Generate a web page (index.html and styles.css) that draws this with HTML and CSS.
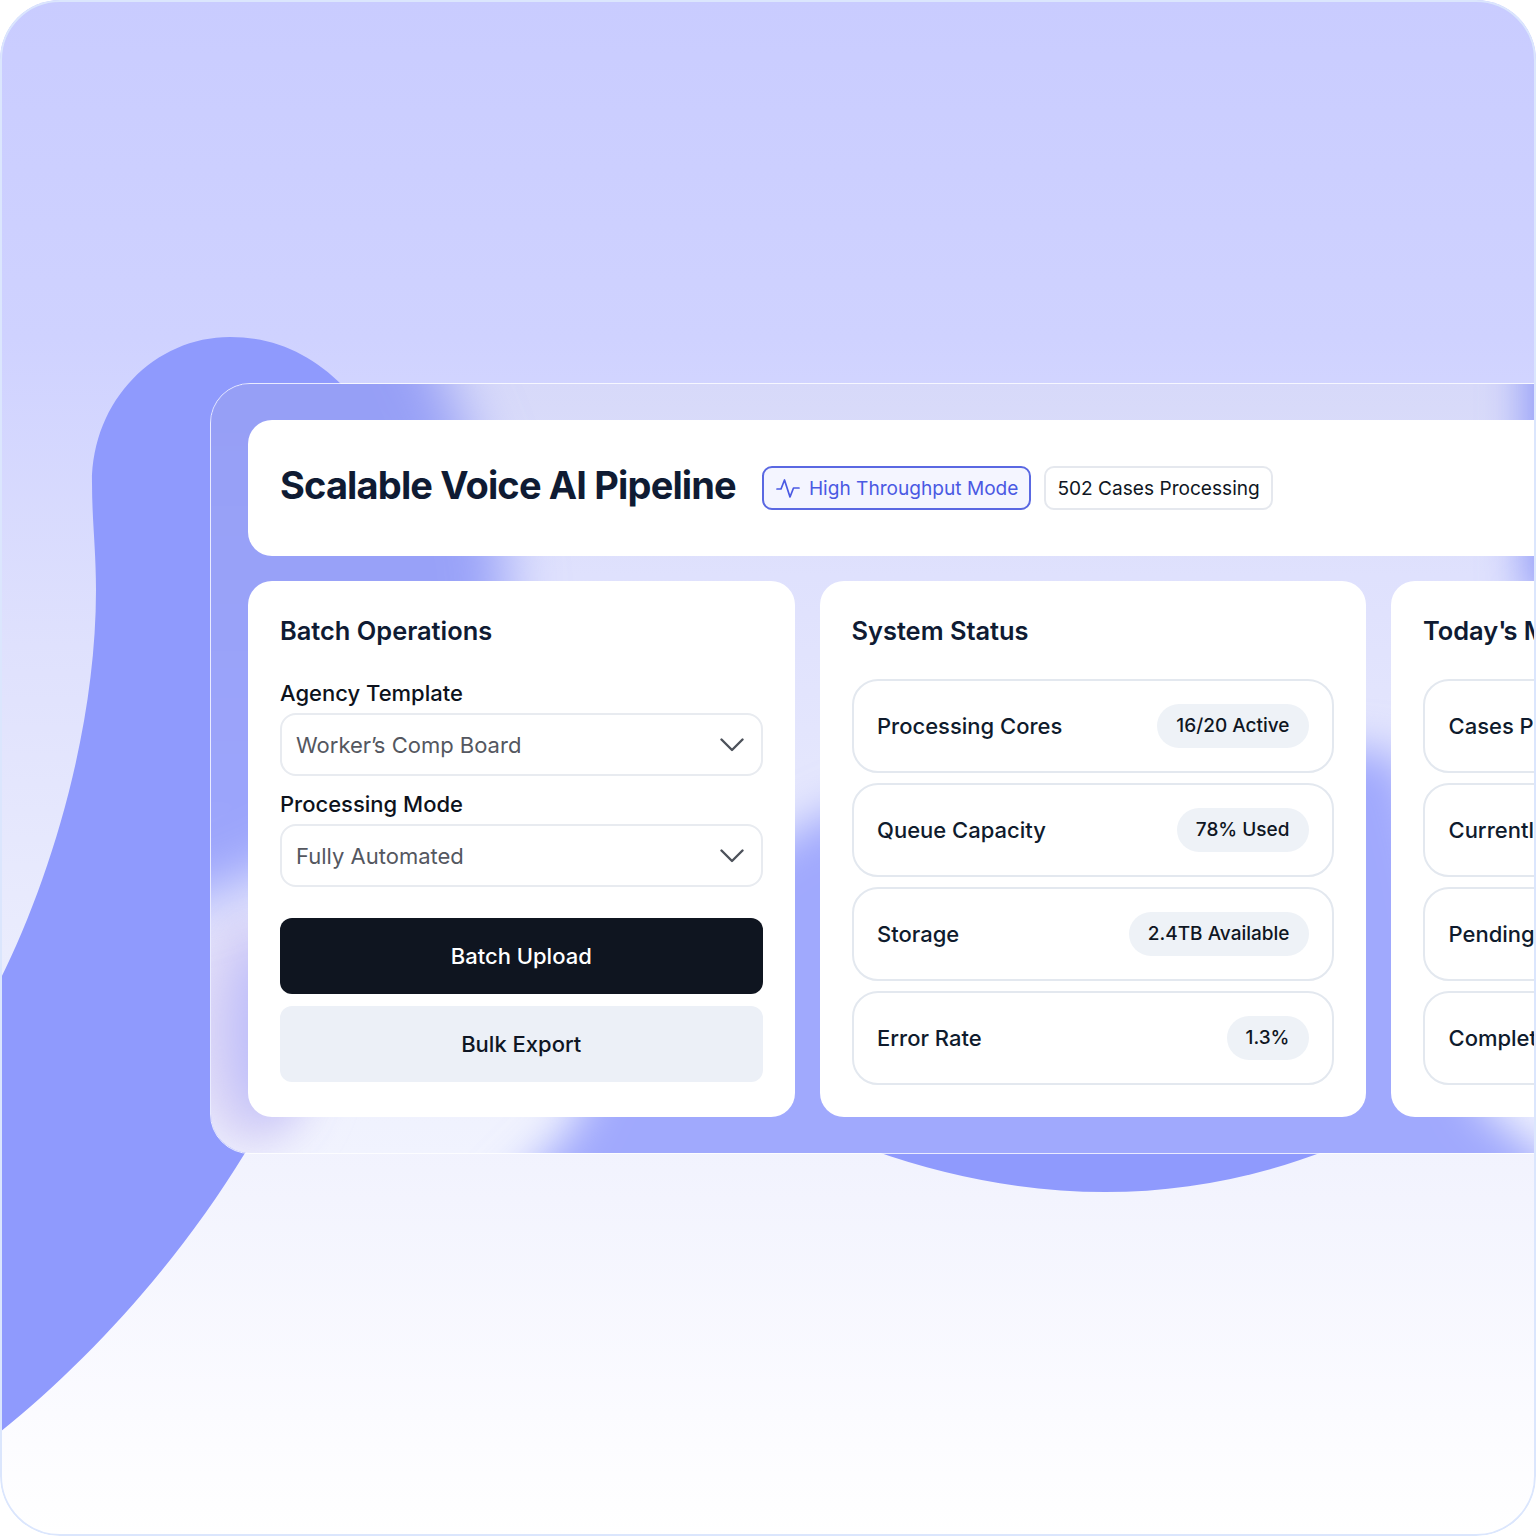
FILE: index.html
```html
<!DOCTYPE html>
<html lang="en">
<head>
<meta charset="utf-8">
<title>Scalable Voice AI Pipeline</title>
<link rel="stylesheet" href="styles.css">
</head>
<body>
<div class="page">
  <svg class="blobs" viewBox="0 0 1536 1536" aria-hidden="true">
    <path d="M0 980C50 880 96 730 96 590C96 550 92 520 92 483C92 400 155 337 230 337C275 337 312 355 342 385L342 1000L250 1148L245 1153C180 1260 90 1360 0 1432Z"/>
    <path d="M872 1150C950 1178 1030 1192 1105 1192C1180 1192 1255 1178 1328 1150Z"/>
  </svg>
  <main class="panel">
    <svg class="glass" viewBox="210 383 1326 770" aria-hidden="true">
      <defs>
        <linearGradient id="base" x1="0" y1="383" x2="0" y2="1153" gradientUnits="userSpaceOnUse">
          <stop offset="0" stop-color="#d7d9f9"/>
          <stop offset=".25" stop-color="#dfe1fd"/>
          <stop offset=".6" stop-color="#e6e8fd"/>
          <stop offset="1" stop-color="#f1f3fe"/>
        </linearGradient>
        <linearGradient id="blueA" x1="0" y1="383" x2="0" y2="900" gradientUnits="userSpaceOnUse">
          <stop offset="0" stop-color="#969ff6"/>
          <stop offset="1" stop-color="#9da6fc"/>
        </linearGradient>
        <filter id="soft" filterUnits="userSpaceOnUse" x="0" y="0" width="2000" height="2000"><feGaussianBlur stdDeviation="28"/></filter>
        <filter id="mid" filterUnits="userSpaceOnUse" x="0" y="0" width="2000" height="2000"><feGaussianBlur stdDeviation="22"/></filter>
      </defs>
      <rect x="210" y="383" width="1326" height="770" fill="url(#base)"/>
      <ellipse cx="250" cy="1030" rx="70" ry="120" fill="#dcd7f7" filter="url(#mid)"/>
      <ellipse cx="266" cy="1030" rx="34" ry="90" fill="#bcbcfa" filter="url(#mid)"/>
      <path d="M100 250L400 250C420 360 520 500 505 620C470 760 330 880 100 925Z" fill="url(#blueA)" filter="url(#soft)"/>
      <path d="M470 1230L570 1130C650 960 730 830 900 790C1050 750 1290 735 1400 755C1450 900 1455 1040 1480 1105L1580 1185L1580 1330L470 1330Z" fill="#a0a9fd" filter="url(#mid)"/>
      <rect x="1525" y="300" width="100" height="300" fill="#8f99f8" filter="url(#mid)"/>
    </svg>
    <header class="head">
      <h1 class="title">Scalable Voice AI Pipeline</h1>
      <span class="badge badge-active">
        <svg class="pulse" viewBox="0 0 24 24" aria-hidden="true"><polyline points="1,13 5,13 8.5,4 14,21 17.5,12 23,12"/></svg>
        High Throughput Mode
      </span>
      <span class="badge">502 Cases Processing</span>
    </header>
    <div class="cols">
      <section class="card">
        <h2 class="card-title card-title-form">Batch Operations</h2>
        <label class="label">Agency Template</label>
        <div class="select">
          <span>Worker<span class="apos">’</span>s Comp Board</span>
          <svg class="chev" viewBox="0 0 24 14" aria-hidden="true"><polyline points="1.5,1.5 12,12 22.5,1.5"/></svg>
        </div>
        <label class="label">Processing Mode</label>
        <div class="select">
          <span>Fully Automated</span>
          <svg class="chev" viewBox="0 0 24 14" aria-hidden="true"><polyline points="1.5,1.5 12,12 22.5,1.5"/></svg>
        </div>
        <button class="btn btn-dark">Batch Upload</button>
        <button class="btn btn-light">Bulk Export</button>
      </section>
      <section class="card">
        <h2 class="card-title">System Status</h2>
        <ul class="rows">
          <li class="row"><span>Processing Cores</span><span class="pill">16/20 Active</span></li>
          <li class="row"><span>Queue Capacity</span><span class="pill">78% Used</span></li>
          <li class="row"><span>Storage</span><span class="pill">2.4TB Available</span></li>
          <li class="row"><span>Error Rate</span><span class="pill">1.3%</span></li>
        </ul>
      </section>
      <section class="card">
        <h2 class="card-title">Today<span class="apos">'</span>s Metrics</h2>
        <ul class="rows">
          <li class="row"><span>Cases Processed</span><span class="pill">1,248</span></li>
          <li class="row"><span>Currently Active</span><span class="pill">502</span></li>
          <li class="row"><span>Pending Review</span><span class="pill">36</span></li>
          <li class="row"><span>Completed</span><span class="pill">710</span></li>
        </ul>
      </section>
    </div>
  </main>
</div>
</body>
</html>
```

FILE: styles.css
```css
* { box-sizing: border-box; }
html, body { margin: 0; padding: 0; background: #fff; }
body { font-family: Inter, "Liberation Sans", sans-serif; color: #0f1623; }

.page {
  position: relative;
  width: 1536px;
  height: 1536px;
  padding: 383px 0 0 210px;
  overflow: hidden;
  border-radius: 60px;
  background: linear-gradient(180deg, #c9ccff 0%, #cfd2ff 22%, #dfe1fd 42%, #e9ebfd 60%, #f3f4fe 78%, #fbfbff 92%, #ffffff 100%);
}
.page::after {
  content: "";
  position: absolute;
  inset: 0;
  border: 2px solid #dbe6fd;
  border-radius: 60px;
  pointer-events: none;
}
.blobs {
  position: absolute;
  inset: 0;
  width: 1536px;
  height: 1536px;
  fill: #8f9afd;
}

.panel {
  position: relative;
  width: 1765px;
  height: 771px;
  padding: 35.5px 37px;
  border: 1.5px solid rgba(255, 255, 255, .8);
  border-radius: 40px;
  overflow: hidden;
}
.glass {
  position: absolute;
  left: -1.5px;
  top: -1.5px;
  width: 1326px;
  height: 770px;
}

.head {
  position: relative;
  display: flex;
  align-items: center;
  height: 136px;
  padding: 0 32px;
  background: #fff;
  border-radius: 24px;
}
.title {
  margin: 0 26px 0 0;
  font-size: 38px;
  line-height: 46px;
  font-weight: 700;
  letter-spacing: -.85px;
  color: #0f1b33;
  position: relative;
  top: -3px;
}
.badge {
  display: flex;
  align-items: center;
  gap: 9px;
  height: 44px;
  padding: 0 11px 0 11px;
  margin-right: 13px;
  border: 2px solid #e5e8ee;
  border-radius: 10px;
  font-size: 19.1px;
  font-weight: 400;
  color: #0f1623;
}
.badge-active {
  padding-left: 12px;
  border-color: #5a68e2;
  background: #f4f5ff;
  color: #4a59e3;
}
.pulse {
  width: 24px;
  height: 24px;
  fill: none;
  stroke: #4a59e3;
  stroke-width: 1.7;
  stroke-linecap: round;
  stroke-linejoin: round;
}

.cols {
  position: relative;
  display: grid;
  grid-template-columns: 546.5px 546.5px 546.5px;
  gap: 25px;
  margin-top: 25px;
}
.card {
  height: 536px;
  padding: 33px 32px 32px;
  background: #fff;
  border-radius: 24px;
}
.card-title {
  margin: 0 0 31px;
  font-size: 25.4px;
  line-height: 34px;
  font-weight: 600;
  color: #0f1b33;
}
.card-title-form { margin-bottom: 30px; }
.apos { letter-spacing: -3px; }

.label {
  display: block;
  font-size: 22px;
  line-height: 30px;
  font-weight: 500;
  color: #0d121c;
  margin-bottom: 5px;
}
.select {
  display: flex;
  align-items: center;
  justify-content: space-between;
  height: 63px;
  padding: 2px 17px 0 14px;
  margin-bottom: 13px;
  border: 2px solid #e8ebf0;
  border-radius: 16px;
  font-size: 22px;
  color: #54575f;
}
.chev {
  width: 24px;
  height: 14px;
  fill: none;
  stroke: #4d525b;
  stroke-width: 2.4;
  stroke-linecap: round;
  stroke-linejoin: round;
}
.btn {
  display: block;
  width: 100%;
  height: 76px;
  border: 0;
  border-radius: 12px;
  font: 500 22px Inter, "Liberation Sans", sans-serif;
}
.btn-dark { margin-top: 31px; background: #0f1520; color: #fff; }
.btn-light { margin-top: 12px; background: #ecf0f7; color: #0f1623; }

.rows {
  display: flex;
  flex-direction: column;
  gap: 10px;
  margin: 0;
  padding: 0;
  list-style: none;
}
.row {
  display: flex;
  align-items: center;
  justify-content: space-between;
  height: 94px;
  padding: 0 23.5px;
  border: 2px solid #e3e8ef;
  border-radius: 26px;
  font-size: 22px;
  font-weight: 500;
  color: #0f1b2d;
}
.pill {
  display: flex;
  align-items: center;
  height: 44px;
  padding: 0 19px;
  border-radius: 22px;
  background: #eef2f7;
  font-size: 19px;
  font-weight: 500;
  color: #0f1623;
}
```
